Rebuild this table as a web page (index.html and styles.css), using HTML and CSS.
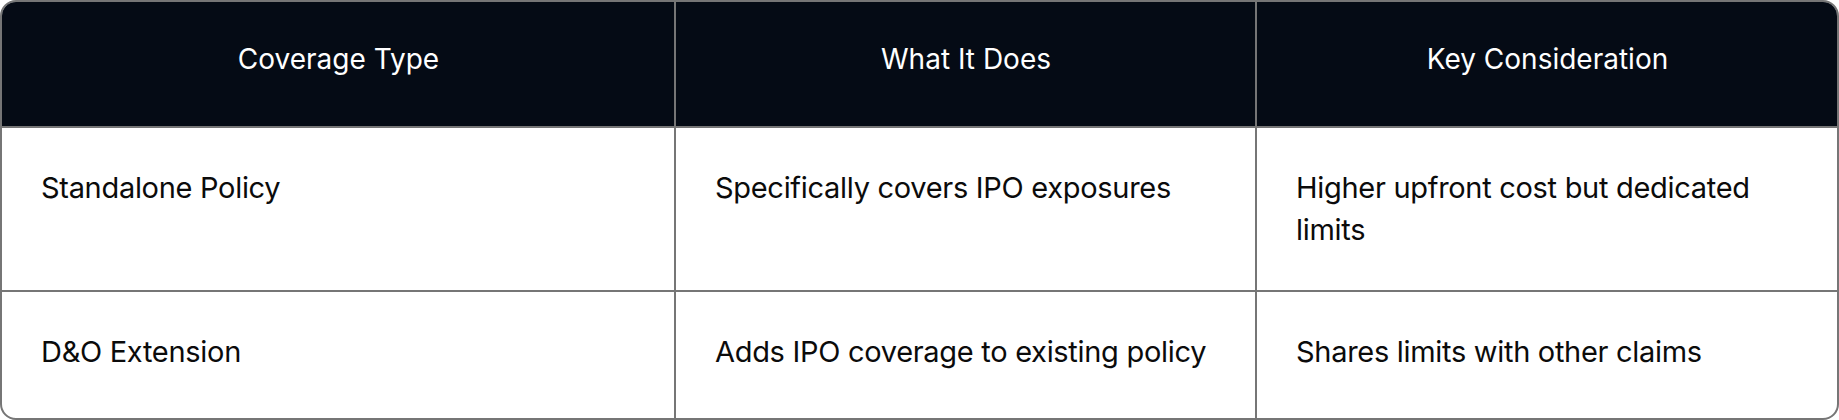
FILE: index.html
```html
<!DOCTYPE html>
<html lang="en">
<head>
<meta charset="utf-8">
<title>Coverage Types</title>
<link rel="stylesheet" href="styles.css">
</head>
<body>
<div class="table">
  <div class="row head">
    <div class="cell c1">Coverage Type</div>
    <div class="cell c2">What It Does</div>
    <div class="cell c3">Key Consideration</div>
  </div>
  <div class="row">
    <div class="cell c1">Standalone Policy</div>
    <div class="cell c2">Specifically covers IPO exposures</div>
    <div class="cell c3">Higher upfront cost but dedicated limits</div>
  </div>
  <div class="row last">
    <div class="cell c1">D&amp;O Extension</div>
    <div class="cell c2">Adds IPO coverage to existing policy</div>
    <div class="cell c3">Shares limits with other claims</div>
  </div>
</div>
</body>
</html>
```

FILE: styles.css
```css
html, body {
  margin: 0;
  padding: 0;
  background: #ffffff;
}

.table {
  width: 1839px;
  box-sizing: border-box;
  border: 2px solid #767676;
  border-radius: 16px;
  overflow: hidden;
  font-family: Inter, "Liberation Sans", sans-serif;
  font-size: 29px;
  letter-spacing: -0.3px;
  line-height: 42px;
  color: #0b0b0b;
}

.row {
  display: grid;
  grid-template-columns: 672px 581px 1fr;
  min-height: 126px;
}

.row + .row {
  border-top: 2px solid #767676;
}

.cell {
  padding: 39px 38px 39px 39px;
}

.cell + .cell {
  border-left: 2px solid #767676;
}

.head {
  background: #050b15;
  color: #ffffff;
  min-height: 124px;
}

.head .cell {
  text-align: center;
  font-size: 28px;
  letter-spacing: 0;
  padding-top: 36px;
  padding-bottom: 40px;
}
```
